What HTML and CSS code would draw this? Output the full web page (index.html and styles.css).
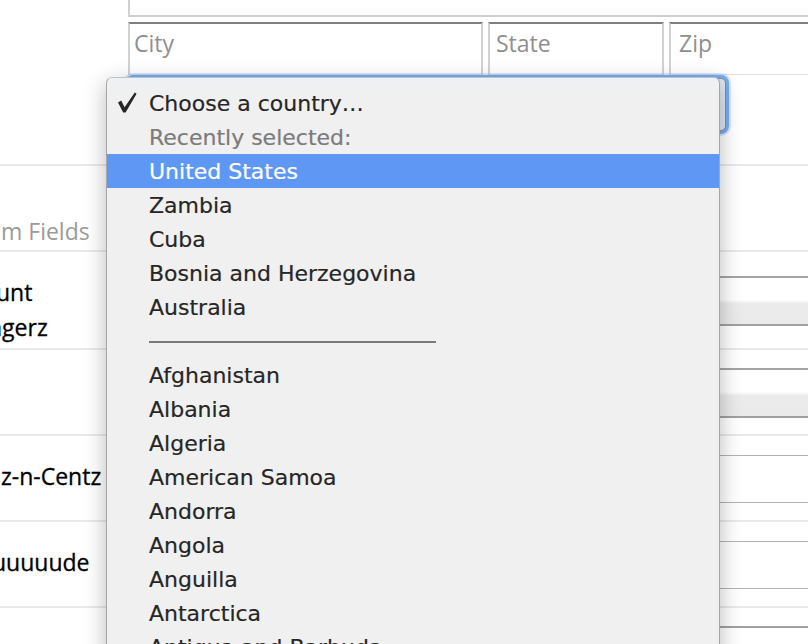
FILE: index.html
```html
<!DOCTYPE html>
<html>
<head>
<meta charset="utf-8">
<title>Address form</title>
<link rel="stylesheet" href="styles.css">
</head>
<body>
<div class="page">
  <div class="row row-address">
    <div class="label"></div>
    <div class="fields fields-address">
      <div class="input street"></div>
      <div class="addr-line">
        <div class="input city">City</div>
        <div class="input state">State</div>
        <div class="input zip">Zip</div>
      </div>
      <div class="select-box"></div>
    </div>
  </div>
  <div class="row row-header">
    <div class="label label-header"><span class="frag frag-fields">m Fields</span></div>
  </div>
  <div class="row">
    <div class="label label-two"><span class="frag frag-unt">unt</span><span class="frag frag-gerz">ngerz</span></div>
    <div class="fields pad-c"><div class="btn-field"></div></div>
  </div>
  <div class="row">
    <div class="label"></div>
    <div class="fields pad-d"><div class="btn-field"></div></div>
  </div>
  <div class="row">
    <div class="label"><span class="frag frag-centz">z-n-Centz</span></div>
    <div class="fields pad-e"><div class="text-field"></div></div>
  </div>
  <div class="row">
    <div class="label"><span class="frag frag-dude">uuuuude</span></div>
    <div class="fields pad-e"><div class="text-field"></div></div>
  </div>
  <div class="row row-last">
    <div class="label"></div>
    <div class="fields pad-g"><div class="area-field"></div></div>
  </div>
</div>

<div class="dropdown">
  <div class="opt checked">
    <svg class="check" width="22" height="24" viewBox="0 0 22 24"><polygon points="1,10.5 4.2,8.6 7.6,15.2 17.8,0.6 19.6,1.8 8.6,20.6 6.2,20.6" fill="#262626"/></svg>
    Choose a country…
  </div>
  <div class="opt muted">Recently selected:</div>
  <div class="opt selected">United States</div>
  <div class="opt">Zambia</div>
  <div class="opt">Cuba</div>
  <div class="opt">Bosnia and Herzegovina</div>
  <div class="opt">Australia</div>
  <div class="opt sep"><div class="sep-line"></div></div>
  <div class="opt">Afghanistan</div>
  <div class="opt">Albania</div>
  <div class="opt">Algeria</div>
  <div class="opt">American Samoa</div>
  <div class="opt">Andorra</div>
  <div class="opt">Angola</div>
  <div class="opt">Anguilla</div>
  <div class="opt">Antarctica</div>
  <div class="opt">Antigua and Barbuda</div>
  <div class="opt">Argentina</div>
</div>
</body>
</html>
```

FILE: styles.css
```css
* { box-sizing: border-box; }
html, body { margin: 0; padding: 0; }
body {
  width: 808px;
  height: 644px;
  overflow: hidden;
  background: #ffffff;
  font-family: "Open Sans", "Noto Sans", sans-serif;
  position: relative;
}
.page { width: 980px; }

.row {
  display: grid;
  grid-template-columns: 128px 1fr;
  border-bottom: 2px solid #e9e9e9;
}
.label {
  font-size: 23px;
  line-height: 33px;
  color: #000000;
  -webkit-text-stroke: 0.3px #000000;
  white-space: nowrap;
  padding-top: 24px;
  display: flex;
  flex-direction: column;
  align-items: flex-start;
}
.label-two { line-height: 35px; padding-top: 23px; }
.frag { display: block; }
.frag-fields { margin-left: 1px; color: #9a9a9a; -webkit-text-stroke: 0; }
.frag-unt { margin-left: -4px; }
.frag-gerz { margin-left: -12px; }
.frag-centz { margin-left: 1px; }
.frag-dude { margin-left: -8px; }

.row-header { height: 86px; }
.label-header { padding-top: 49px; grid-column: 1 / 3; }

/* address block */
.fields-address {
  display: flex;
  flex-direction: column;
  padding-bottom: 33px;
}
.input {
  font-size: 23px;
  line-height: 33px;
  color: #8f8f8f;
}
.street {
  height: 17px;
  border-left: 2px solid #d0d0d0;
  border-bottom: 2px solid #cfcfcf;
}
.addr-line {
  display: flex;
  gap: 5px;
  margin-top: 5px;
}
.addr-line .input {
  height: 53px;
  border: 2px solid #d2d2d2;
  border-top: 2px solid #7e7e7e;
  border-bottom: 1px solid #e0e0e0;
  padding: 3px 5px 0;
  background: #ffffff;
}
.addr-line .city { width: 355px; padding-left: 4px; }
.addr-line .state { width: 176px; padding-left: 6px; }
.addr-line .zip { width: 300px; padding-left: 8px; }
.select-box {
  width: 598px;
  height: 53px;
  margin-top: 3px;
  border: 1px solid #8e8e8e;
  border-radius: 5px;
  background: #dfe7f1;
  box-shadow: 0 0 0 3px rgba(96, 158, 238, 0.8), 0 0 0 5px rgba(140, 186, 245, 0.35);
}

/* right side fields */
.pad-c { padding: 24px 0 22px; }
.pad-d { padding: 18px 0 16px; }
.pad-e { padding: 19px 0 17px; }
.pad-g { padding: 18px 0 0; }
.row-last { border-bottom: 0; }

.btn-field {
  height: 50px;
  border-top: 2px solid #a4a4a4;
  border-bottom: 2px solid #a0a0a0;
  background: linear-gradient(#ffffff 0%, #ffffff 47%, #ebebeb 56%, #eaeaea 100%);
}
.text-field {
  height: 48px;
  border-top: 1px solid #b2b2b2;
  border-bottom: 1px solid #b2b2b2;
  background: #ffffff;
}
.area-field {
  height: 60px;
  border-top: 2px solid #a0a0a0;
}

/* native popup menu overlay */
.dropdown {
  position: absolute;
  left: 106px;
  top: 77px;
  width: 614px;
  height: 640px;
  background: linear-gradient(#eef0f1 0px, #f0f0f0 24px);
  border: 1px solid #a6a6a6;
  border-top-color: #b9c4d1;
  border-bottom: 0;
  border-radius: 6px 6px 0 0;
  box-shadow: 0 6px 22px rgba(0, 0, 0, 0.28);
  padding-top: 8px;
  font-family: "DejaVu Sans", sans-serif;
  font-size: 22px;
  color: #262626;
}
.opt {
  position: relative;
  height: 34px;
  line-height: 36px;
  padding-left: 42px;
  white-space: nowrap;
  -webkit-text-stroke: 0.2px currentColor;
}
.check {
  position: absolute;
  left: 10px;
  top: 6px;
}
.muted { color: #7b7b7b; }
.selected { background: #5e98f4; color: #ffffff; }
.sep { display: flex; align-items: center; }
.sep-line {
  width: 287px;
  height: 2px;
  background: #7a7a7a;
  margin-top: 1px;
}
```
